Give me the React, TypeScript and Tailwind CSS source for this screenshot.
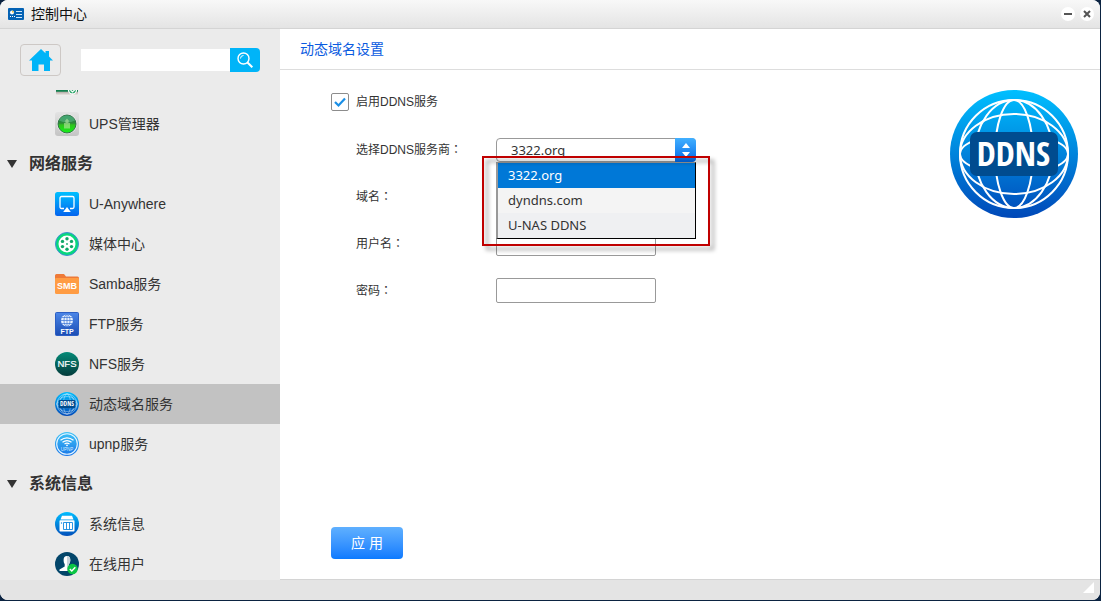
import { useLayoutEffect, useRef, useState } from 'react'
import type { ReactNode } from 'react'
import { clsx } from 'clsx'

const PROVIDERS = ['3322.org', 'dyndns.com', 'U-NAS DDNS']

const StorageIcon = () => (
  <svg viewBox="0 0 24 24" className="size-6">
    <defs>
      <linearGradient id="storage" x1="0" y1="0" x2="0" y2="1">
        <stop offset="0.82" stopColor="#12804f" />
        <stop offset="0.86" stopColor="#b9b0ab" />
        <stop offset="1" stopColor="#f2efed" />
      </linearGradient>
    </defs>
    <rect x="1" y="0" width="22" height="23.500" rx="2" fill="url(#storage)" />
    <circle cx="17.500" cy="18" r="4" fill="#2fa66c" stroke="#fff" strokeWidth="1.300" />
    <path d="M15.500 18l2 2 3-3" fill="none" stroke="#fff" strokeWidth="1.200" />
  </svg>
)

const UpsIcon = () => (
  <svg viewBox="0 0 24 24" className="size-6">
    <defs>
      <linearGradient id="upsFrame" x1="0" y1="0" x2="0" y2="1">
        <stop stopColor="#e3e3e3" />
        <stop offset="1" stopColor="#c4c4c4" />
      </linearGradient>
      <linearGradient id="upsBall" x1="0" y1="0" x2="0" y2="1">
        <stop stopColor="#1c8f55" />
        <stop offset="0.45" stopColor="#2f8a3a" />
        <stop offset="0.55" stopColor="#2fc41d" />
        <stop offset="1" stopColor="#13f01a" />
      </linearGradient>
    </defs>
    <rect width="24" height="24" rx="3" fill="url(#upsFrame)" />
    <circle cx="12" cy="12" r="10" fill="#f4f4f4" />
    <circle cx="12" cy="12" r="9" fill="url(#upsBall)" stroke="#2f7044" />
    <path d="M4 8.500a9 9 0 0 1 16 0q-8 4-16 0z" fill="#6cc39a" opacity="0.450" />
    <path d="M12 6.500l2.500 3h-1V11h1.500v5.500H9V11h1.500V9.500h-1z" fill="#b5e8a0" opacity="0.600" />
  </svg>
)

const AnywhereIcon = () => (
  <svg viewBox="0 0 24 24" className="size-6">
    <defs>
      <linearGradient id="anywhere" x1="0" y1="0" x2="0" y2="1">
        <stop stopColor="#00c0ff" />
        <stop offset="1" stopColor="#0464ee" />
      </linearGradient>
    </defs>
    <rect width="24" height="24" rx="2.500" fill="url(#anywhere)" />
    <path
      d="M9 16.500H6.500A1.500 1.500 0 0 1 5 15V6a1.500 1.500 0 0 1 1.500-1.500h11A1.500 1.500 0 0 1 19 6v9a1.500 1.500 0 0 1-1.500 1.500H15"
      fill="none"
      stroke="#fff"
      strokeWidth="1.300"
    />
    <path d="M12 15l3.800 5H8.200z" fill="#fff" />
  </svg>
)

const MediaIcon = () => (
  <svg viewBox="0 0 24 24" className="size-6">
    <circle cx="12" cy="12" r="11.500" fill="#08d87c" stroke="#3f8fd6" />
    <circle cx="12" cy="12" r="8.500" fill="#fff" />
    <g fill="#10a868">
      <circle cx="12" cy="6.800" r="1.700" />
      <circle cx="16.500" cy="9.400" r="1.700" />
      <circle cx="16.500" cy="14.600" r="1.700" />
      <circle cx="12" cy="17.200" r="1.700" />
      <circle cx="7.500" cy="14.600" r="1.700" />
      <circle cx="7.500" cy="9.400" r="1.700" />
      <circle cx="12" cy="12" r="0.900" />
    </g>
  </svg>
)

const SambaIcon = () => (
  <svg viewBox="0 0 24 24" className="size-6">
    <path d="M0 3.500A1.500 1.500 0 0 1 1.500 2H9l2 2.500h11.500A1.500 1.500 0 0 1 24 6v6H0z" fill="#ee7a38" />
    <path d="M0 7q0-1 1-1h22q1 0 1 1v13.500a1.500 1.500 0 0 1-1.500 1.500h-21A1.500 1.500 0 0 1 0 20.500z" fill="#ff9c43" />
    <text x="12" y="17" textAnchor="middle" fontSize="9" fontWeight="700" fill="#fff">SMB</text>
  </svg>
)

const FtpIcon = () => (
  <svg viewBox="0 0 24 24" className="size-6">
    <defs>
      <linearGradient id="ftp" x1="0" y1="0" x2="0" y2="1">
        <stop stopColor="#4b86e8" />
        <stop offset="1" stopColor="#1b4db4" />
      </linearGradient>
    </defs>
    <rect x="0.500" y="0.500" width="23" height="23" rx="1" fill="url(#ftp)" stroke="#2c5fc4" />
    <circle cx="12" cy="8.500" r="6" fill="#e8f2ff" />
    <g fill="none" stroke="#3a72d4" strokeWidth="0.700">
      <ellipse cx="12" cy="8.500" rx="3" ry="6" />
      <path d="M12 2.500v12M6 8.500h12M7 5.500h10M7 11.500h10" />
    </g>
    <text x="12" y="22" textAnchor="middle" fontSize="7" fontWeight="700" fill="#fff">FTP</text>
  </svg>
)

const NfsIcon = () => (
  <svg viewBox="0 0 24 24" className="size-6">
    <defs>
      <linearGradient id="nfs" x1="0" y1="0" x2="0" y2="1">
        <stop stopColor="#058a78" />
        <stop offset="1" stopColor="#043c3c" />
      </linearGradient>
    </defs>
    <circle cx="12" cy="12" r="12" fill="url(#nfs)" />
    <text x="12" y="15.300" textAnchor="middle" fontSize="9.500" fill="#fff" stroke="#fff" strokeWidth="0.200">NFS</text>
  </svg>
)

const DdnsIcon = ({ className, id }: { className: string; id: string }) => (
  <svg viewBox="0 0 128 128" className={className}>
    <defs>
      <linearGradient id={id} x1="0" y1="0" x2="0" y2="1">
        <stop stopColor="#00bfff" />
        <stop offset="1" stopColor="#0048b8" />
      </linearGradient>
    </defs>
    <circle cx="64" cy="64" r="64" fill={`url(#${id})`} />
    <g fill="none" stroke="#fff" strokeWidth="2">
      <circle cx="64" cy="64" r="54" />
      <ellipse cx="64" cy="64" rx="19" ry="54" />
      <ellipse cx="64" cy="64" rx="39" ry="54" />
      <ellipse cx="64" cy="64" rx="54" ry="20" />
      <ellipse cx="64" cy="64" rx="54" ry="40" />
    </g>
    <rect x="20" y="42" width="88" height="44" rx="7" fill="#004c8f" />
    <text
      x="63.500"
      y="76"
      textAnchor="middle"
      fontSize="34"
      fontWeight="700"
      fill="#fff"
      className="font-['Open_Sans_Condensed','Noto_Sans_Condensed','DejaVu_Sans_Condensed','Open_Sans',sans-serif] [font-stretch:condensed]"
    >
      DDNS
    </text>
  </svg>
)

const UpnpIcon = () => (
  <svg viewBox="0 0 24 24" className="size-6">
    <defs>
      <linearGradient id="upnp" x1="0" y1="0" x2="0" y2="1">
        <stop stopColor="#3fc4f6" />
        <stop offset="1" stopColor="#1976e8" />
      </linearGradient>
    </defs>
    <circle cx="12" cy="12" r="12" fill="url(#upnp)" />
    <circle cx="12" cy="12" r="10.300" fill="none" stroke="#e9f6ff" strokeWidth="1.100" />
    <g fill="none" stroke="#fff" strokeWidth="1.200">
      <path d="M5.500 8.300q6.500-5 13 0M7.500 10.300q4.500-3.500 9 0M9.500 12q2.500-1.800 5 0" />
    </g>
    <circle cx="12" cy="13.300" r="0.900" fill="#fff" />
    <text x="12" y="18.800" textAnchor="middle" fontSize="4.500" fill="#d8ecff">UPNP</text>
  </svg>
)

const SystemIcon = () => (
  <svg viewBox="0 0 24 24" className="size-6">
    <defs>
      <linearGradient id="system" x1="0" y1="0" x2="0" y2="1">
        <stop stopColor="#00bdff" />
        <stop offset="1" stopColor="#0250bb" />
      </linearGradient>
    </defs>
    <circle cx="12" cy="12" r="12" fill="url(#system)" />
    <path d="M7 3.800h10l1.500 3.700h-13z" fill="#fff" />
    <rect x="4.500" y="8.300" width="15" height="11.200" rx="0.800" fill="#fff" />
    <path d="M8.500 10.500h9v7h-9zM11.500 10.500v7M14.500 10.500v7" fill="none" stroke="#1389e0" strokeWidth="0.900" />
    <circle cx="6.500" cy="11" r="0.700" fill="#1389e0" />
  </svg>
)

const OnlineIcon = () => (
  <svg viewBox="0 0 24 24" className="size-6">
    <circle cx="12" cy="12" r="12" fill="#03466a" />
    <path
      d="M12 4c2.300 0 3.300 1.600 3.300 4 0 1.900-.6 3.200-1.500 4.200v2l5 2.300V19H4.500v-1.500l5.200-3v-2.300C9 11.200 8.600 9.800 8.600 8 8.600 5.600 9.700 4 12 4z"
      fill="#fff"
    />
    <path d="M12 4c2.300 0 3.300 1.600 3.300 4 0 1.900-.6 3.200-1.500 4.200v2l2 4.800H12z" fill="#c7d3da" />
    <circle cx="17.500" cy="17" r="5.200" fill="#0cc544" />
    <path d="M14.800 17l2 2 3.500-3.700" fill="none" stroke="#fff" strokeWidth="1.400" />
  </svg>
)

interface NavItem {
  label?: string
  icon: ReactNode
  active?: boolean
}

const storageItems: NavItem[] = [
  { icon: <StorageIcon /> },
  { label: 'UPS管理器', icon: <UpsIcon /> },
]

const networkItems: NavItem[] = [
  { label: 'U-Anywhere', icon: <AnywhereIcon /> },
  { label: '媒体中心', icon: <MediaIcon /> },
  { label: 'Samba服务', icon: <SambaIcon /> },
  { label: 'FTP服务', icon: <FtpIcon /> },
  { label: 'NFS服务', icon: <NfsIcon /> },
  { label: '动态域名服务', icon: <DdnsIcon id="ddnsSmall" className="size-6" />, active: true },
  { label: 'upnp服务', icon: <UpnpIcon /> },
]

const systemItems: NavItem[] = [
  { label: '系统信息', icon: <SystemIcon /> },
  { label: '在线用户', icon: <OnlineIcon /> },
]

const NavGroup = ({ title, items }: { title?: string; items: NavItem[] }) => (
  <>
    {title && (
      <h2 className="flex h-10 items-center gap-3 pl-[7px] text-base font-bold">
        <svg viewBox="0 0 10 8" className="h-2 w-2.5">
          <path d="M0 0h10L5 8z" fill="#333" />
        </svg>
        {title}
      </h2>
    )}
    <ul>
      {items.map((item, index) => (
        <li key={index}>
          <a
            href="#"
            className={clsx('flex h-10 items-center gap-2.5 pl-[55px] text-sm', item.active && 'bg-[#c2c2c2]')}
          >
            {item.icon}
            {item.label}
          </a>
        </li>
      ))}
    </ul>
  </>
)

const Sidebar = () => {
  const listRef = useRef<HTMLElement>(null)

  useLayoutEffect(() => {
    if (listRef.current) listRef.current.scrollTop = 26
  }, [])

  return (
    <aside className="flex w-[280px] shrink-0 flex-col bg-[#ebebeb]">
      <div className="flex h-[61px] shrink-0 items-center px-5">
        <button
          aria-label="主页"
          className="flex h-8 w-[41px] shrink-0 items-center justify-center rounded border border-[#cdc8c5]"
        >
          <svg viewBox="0 0 24 22" className="h-[22px] w-6">
            <path d="M12 0l4.500 4.300V2H20v5.500l4 4h-3V22h-6v-6.500H9.500V22H3V11.500H0z" fill="#00b4f8" />
          </svg>
        </button>
        <form className="ml-5 flex min-w-0 flex-1 items-center" onSubmit={(e) => e.preventDefault()}>
          <input type="text" aria-label="搜索" className="h-[22px] min-w-0 flex-1 bg-white px-2 text-xs outline-none" />
          <button
            aria-label="搜索"
            className="flex h-6 w-[30px] shrink-0 items-center justify-center rounded-r bg-[#00b4f8]"
          >
            <svg viewBox="0 0 16 16" className="size-4" fill="none" stroke="#fff">
              <circle cx="6.500" cy="6.500" r="5.500" strokeWidth="1.400" />
              <path d="M3.500 6.500a3 3 0 0 1 3-3" strokeWidth="1" />
              <path d="M10.500 10.500l4.800 4.800" strokeWidth="2" />
            </svg>
          </button>
        </form>
      </div>
      <nav ref={listRef} className="min-h-0 flex-1 overflow-hidden">
        <NavGroup items={storageItems} />
        <NavGroup title="网络服务" items={networkItems} />
        <NavGroup title="系统信息" items={systemItems} />
      </nav>
    </aside>
  )
}

const Row = ({ label, htmlFor, children }: { label: string; htmlFor: string; children: ReactNode }) => (
  <div className="flex h-[47px] items-center pl-[25px]">
    <label htmlFor={htmlFor} className="w-[140px]">
      {label}
      <span className="font-['Noto_Sans_CJK_JP',sans-serif]">：</span>
    </label>
    {children}
  </div>
)

const ProviderSelect = () => {
  const [provider, setProvider] = useState(PROVIDERS[0])

  return (
    <div className="relative z-10 w-[200px] font-['Noto_Sans',sans-serif] text-[13px]">
      <select
        id="provider"
        value={provider}
        onChange={(e) => setProvider(e.target.value)}
        className="block h-6 w-full appearance-none rounded-sm border border-[#999] bg-white pl-3.5 leading-5 outline-none"
      >
        {PROVIDERS.map((name) => (
          <option key={name}>{name}</option>
        ))}
      </select>
      <span className="pointer-events-none absolute top-0 right-0 flex h-6 w-[21px] items-center justify-center rounded-r-sm bg-linear-to-b from-[#42b0ff] to-[#0068e8]">
        <svg viewBox="0 0 8 14" className="h-3.5 w-2">
          <path d="M4 0l4 5H0zM4 14l4-5H0z" fill="#fff" />
        </svg>
      </span>
      <ul
        role="listbox"
        aria-label="DDNS服务商"
        className="absolute top-full left-0 w-full border border-l-2 border-black border-t-[#999] border-l-[#999]"
      >
        {PROVIDERS.map((name) => (
          <li
            key={name}
            role="option"
            aria-selected={name === provider}
            onClick={() => setProvider(name)}
            className={clsx(
              'h-[25px] pl-2.5 leading-[25px]',
              name === provider ? 'bg-[#0078d7] text-white' : 'bg-[#f4f4f4] last:bg-[#eff0f2]'
            )}
          >
            {name}
          </li>
        ))}
      </ul>
      {/* Highlight frame around the open list */}
      <div className="pointer-events-none absolute top-[18px] -left-3.5 h-[90px] w-[228px] border-2 border-[#c00000] drop-shadow-[4px_4px_2px_rgba(0,0,0,0.4)]" />
    </div>
  )
}

const inputClass = 'h-[25px] w-40 rounded-xs border border-[#999] bg-white px-2 outline-none'

const DdnsForm = () => {
  const [enabled, setEnabled] = useState(true)

  return (
    <form className="flex flex-1 flex-col pb-5 pl-[51px] pt-2" onSubmit={(e) => e.preventDefault()}>
      <div className="text-xs">
        <label className="flex h-12 items-center gap-[7px]">
          <span className="relative size-[18px]">
            <input
              type="checkbox"
              checked={enabled}
              onChange={(e) => setEnabled(e.target.checked)}
              className="peer block size-full appearance-none rounded-xs border border-[#8c8c8c] bg-white"
            />
            <svg
              viewBox="0 0 18 18"
              className="pointer-events-none absolute inset-0 hidden peer-checked:block"
              fill="none"
              stroke="#1a8fe6"
              strokeWidth="2.200"
            >
              <path d="M4 9l3.500 3.500 6.500-7" />
            </svg>
          </span>
          启用DDNS服务
        </label>
        <Row label="选择DDNS服务商" htmlFor="provider">
          <ProviderSelect />
        </Row>
        <Row label="域名" htmlFor="domain">
          <input id="domain" type="text" className={inputClass} />
        </Row>
        <Row label="用户名" htmlFor="username">
          <input id="username" type="text" className={inputClass} />
        </Row>
        <Row label="密码" htmlFor="password">
          <input id="password" type="password" className={inputClass} />
        </Row>
      </div>
      <button
        type="submit"
        className="mt-auto h-8 w-[72px] rounded bg-linear-to-b from-[#5fb0ff] to-[#0a7aff] text-sm text-white"
      >
        应 用
      </button>
    </form>
  )
}

const TitleBar = () => (
  <header className="flex h-[29px] shrink-0 items-center border-b border-[#d4d4d4] bg-linear-to-b from-[#f8f8f8] to-[#e4e4e4] pr-1.5 pl-2">
    <svg viewBox="0 0 16 12" className="h-3 w-4">
      <rect width="16" height="12" rx="1" fill="#0462b4" />
      <circle cx="4" cy="4.500" r="2" fill="#fff" />
      <path d="M4 2.500a2 2 0 0 1 2 2H4z" fill="#f5c243" />
      <path d="M8 3.500h6M8 6.500h6M8 9.500h6" stroke="#cfe6fa" />
      <path d="M2 8.500h5" stroke="#fff" strokeDasharray="1 1" />
    </svg>
    <h1 className="ml-[7px] text-sm text-[#111]">控制中心</h1>
    <div className="ml-auto flex gap-[5px]">
      <button aria-label="最小化" className="flex size-3.5 items-center justify-center rounded-full bg-white">
        <svg viewBox="0 0 8 8" className="size-2">
          <path d="M0 4h8" stroke="#555" strokeWidth="2" />
        </svg>
      </button>
      <button aria-label="关闭" className="flex size-3.5 items-center justify-center rounded-full bg-white">
        <svg viewBox="0 0 8 8" className="size-2">
          <path d="M1 1l6 6M7 1L1 7" stroke="#555" strokeWidth="2" />
        </svg>
      </button>
    </div>
  </header>
)

export default function App() {
  return (
    <div className="h-screen bg-[#0b2341] pr-px pb-px font-['Liberation_Sans','Noto_Sans_CJK_SC',sans-serif] text-[#333]">
      <div className="flex h-full flex-col overflow-hidden rounded-lg bg-white">
        <TitleBar />
        <div className="flex min-h-0 flex-1">
          <Sidebar />
          <main className="flex min-w-0 flex-1 flex-col border-b border-[#d4d4d4]">
            <h2 className="flex h-[41px] shrink-0 items-center border-b border-[#ddd] px-5 text-sm text-[#0a5be0]">
              动态域名设置
            </h2>
            <div className="flex flex-1">
              <DdnsForm />
              <DdnsIcon id="ddnsLarge" className="mt-5 mr-[22px] size-32 shrink-0" />
            </div>
          </main>
        </div>
        <footer className="flex h-5 shrink-0 justify-end bg-[#e4e4e4] pt-0.5 pr-1.5">
          <svg viewBox="0 0 11 11" className="size-[11px]">
            <path d="M11 0v11H0z" fill="#fff" />
          </svg>
        </footer>
      </div>
    </div>
  )
}
